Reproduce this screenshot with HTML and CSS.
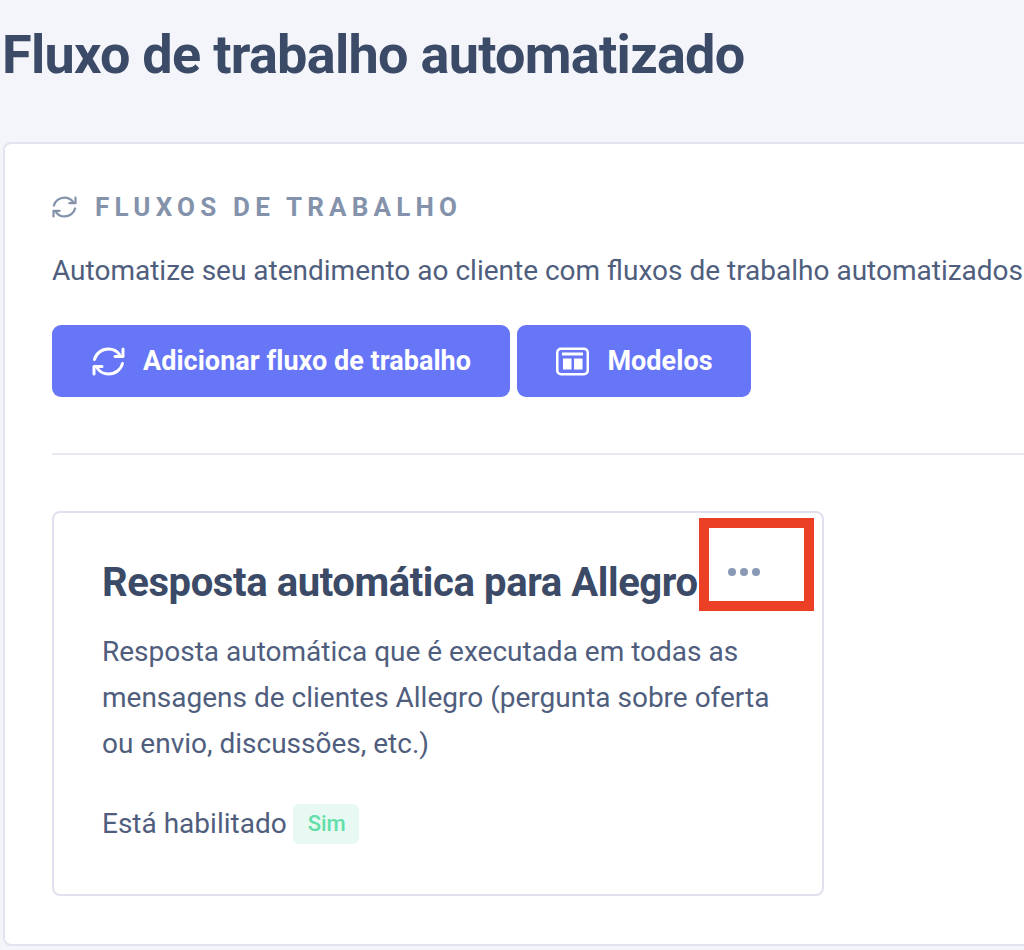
FILE: index.html
```html
<!DOCTYPE html>
<html lang="pt">
<head>
  <meta charset="UTF-8" />
  <meta name="viewport" content="width=device-width, initial-scale=1.0" />
  <title>Fluxo de trabalho automatizado</title>
  <link rel="stylesheet" href="styles.css">
</head>
<body>
  <h1 class="page-title">Fluxo de trabalho automatizado</h1>

  <section class="panel">
    <h2 class="panel-heading">
      <svg class="heading-icon" viewBox="0 0 33 29" fill="none" stroke="currentColor" stroke-width="3" stroke-linecap="round" stroke-linejoin="round">
        <path d="M2.500 12.500C4 6.500 9.500 2 16.500 2c4.500 0 8.500 2 11 5.500" />
        <path d="M31 2v7.500h-8" />
        <path d="M30.500 16.500C29 22.500 23.500 27 16.500 27c-4.500 0-8.500-2-11-5.500" />
        <path d="M2 27v-7.500h8" />
      </svg>
      Fluxos de trabalho
    </h2>
    <p class="panel-desc">Automatize seu atendimento ao cliente com fluxos de trabalho automatizados</p>

    <div class="actions">
      <button class="btn btn-add">
        <svg class="btn-icon" viewBox="0 0 33 29" fill="none" stroke="currentColor" stroke-width="3" stroke-linecap="round" stroke-linejoin="round">
          <path d="M2.500 12.500C4 6.500 9.500 2 16.500 2c4.500 0 8.500 2 11 5.500" />
          <path d="M31 2v7.500h-8" />
          <path d="M30.500 16.500C29 22.500 23.500 27 16.500 27c-4.500 0-8.500-2-11-5.500" />
          <path d="M2 27v-7.500h8" />
        </svg>
        Adicionar fluxo de trabalho
      </button>
      <button class="btn btn-models">
        <svg class="btn-icon" viewBox="0 0 33 28">
          <path fill="none" stroke="currentColor" stroke-width="2.500" d="M5 1.250h23a3.750 3.750 0 0 1 3.750 3.750v18a3.750 3.750 0 0 1-3.750 3.750H5a3.750 3.750 0 0 1-3.750-3.750V5A3.750 3.750 0 0 1 5 1.250z" />
          <path fill="currentColor" d="M6 5h21v3H6zM7 11h8.500v11H7zM18 11h8.500v11H18z" />
        </svg>
        Modelos
      </button>
    </div>

    <hr class="divider" />

    <article class="flow-card">
      <div class="flow-head">
        <h3 class="flow-title">Resposta automática para Allegro</h3>
        <div class="dots"><span></span><span></span><span></span></div>
      </div>
      <p class="flow-desc">Resposta automática que é executada em todas as mensagens de clientes Allegro (pergunta sobre oferta ou envio, discussões, etc.)</p>
      <div class="flow-status">Está habilitado <span class="badge">Sim</span></div>
      <div class="highlight"></div>
    </article>
  </section>
</body>
</html>
```

FILE: styles.css
```css
html, body { height: 950px; overflow: hidden; }
body { margin: 0; padding: 0 0 0 3px; background: #f4f5fa; font-family: Roboto, "Liberation Sans", sans-serif; color: #3b4a66; }

.page-title { margin: 0 0 0 -1px; padding-top: 25px; font-size: 54px; line-height: 60px; height: 117px; box-sizing: border-box; font-weight: 700; letter-spacing: -0.72px; color: #3b4a66; white-space: nowrap; }

.panel { box-sizing: border-box; width: 1100px; height: 804px; margin-top: 25px; padding: 48px 47px 0; background: white; border: 2px solid #e3e4f0; border-radius: 8px; }

.panel-heading { display: flex; align-items: center; gap: 18px; margin: 0; font-size: 26px; line-height: 30px; font-weight: 700; letter-spacing: 5.2px; text-transform: uppercase; color: #8493ab; }
.heading-icon { width: 25px; height: 22px; }

.panel-desc { margin: 31px 0 0; font-size: 28px; line-height: 36px; color: #505e7e; white-space: nowrap; }

.actions { display: flex; gap: 7px; margin-top: 36px; }
.btn { display: flex; align-items: center; justify-content: center; gap: 18px; height: 72px; padding: 0; border: none; border-radius: 9px; background: #6776f7; color: white; font-family: inherit; font-size: 27px; font-weight: 700; letter-spacing: 0.04px; cursor: pointer; }
.btn-add { width: 458px; padding-left: 1px; }
.btn-models { width: 234px; padding-left: 1px; }
.btn-icon { width: 33px; height: 29px; }

.divider { margin: 56px 0 0; border: none; border-top: 2px solid #e8e9f3; }

.flow-card { position: relative; box-sizing: border-box; width: 772px; height: 385px; margin-top: 56px; padding: 45px 48px 0; border: 2px solid #e0e1ee; border-radius: 8px; }
.flow-head { display: flex; align-items: center; }
.flow-title { margin: 0; font-size: 40px; line-height: 50px; font-weight: 700; letter-spacing: -0.4px; color: #3b4a66; white-space: nowrap; }
.dots { display: flex; gap: 4px; margin-left: 30px; margin-top: -23px; }
.dots span { width: 8px; height: 8px; border-radius: 50%; background: #8a9ab5; }

.flow-desc { margin: 21px 0 0; font-size: 28px; line-height: 46px; color: #505e7e; }
.flow-status { display: flex; align-items: center; gap: 6px; margin-top: 37px; font-size: 28px; line-height: 40px; color: #505e7e; }
.badge { padding: 0 13px 0 15px; border-radius: 6px; background: #e8f9f3; color: #62dfa8; font-size: 22px; font-weight: 500; }

.highlight { position: absolute; left: 645px; top: 5px; width: 115px; height: 93px; box-sizing: border-box; border: 10px solid #eb4025; }
```
